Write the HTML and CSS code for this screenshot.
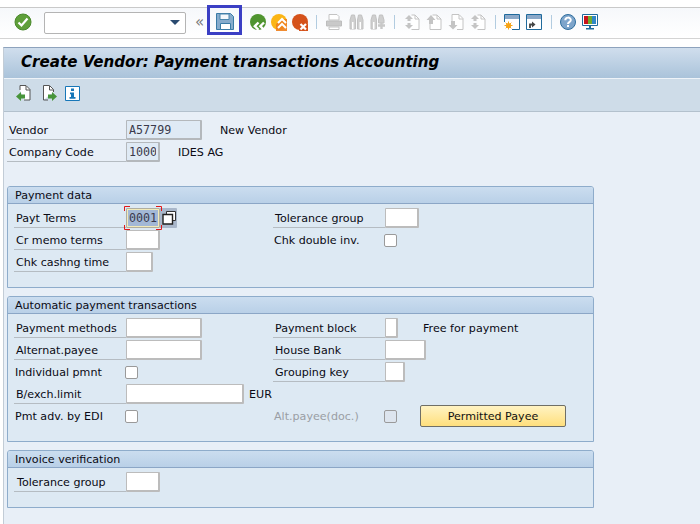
FILE: index.html
```html
<!DOCTYPE html>
<html lang="en">
<head>
<meta charset="utf-8">
<title>Create Vendor: Payment transactions Accounting</title>
<link rel="stylesheet" href="styles.css">
</head>
<body>
<header class="systoolbar">
  <svg class="ico check" width="18" height="18" viewBox="0 0 18 18"><circle cx="9" cy="9" r="8" fill="#5f9f3a" stroke="#4a8a2c"/><path d="M4.500 9.500l3 3 6-7" fill="none" stroke="#fff" stroke-width="2.200"/></svg>
  <div class="combo"><span class="combo-arrow"></span></div>
  <span class="chev">«</span>
  <button class="save" type="button" aria-label="Save"><svg width="18" height="17" viewBox="0 0 18 17"><path d="M.5.500h14l3 3v13H.5z" fill="#86abcc" stroke="#3a7ba6"/><path d="M4 1h9v5.500H4z" fill="#f4f8fb" stroke="#4a86ad"/><path d="M4.500 10.500h10v6h-10z" fill="#fff" stroke="#3a7ba6"/></svg></button>
  <div class="tool-group nav">
    <svg width="16" height="17" viewBox="0 0 16 17"><circle cx="8" cy="8" r="8" fill="#4f9430"/><path d="M8.500 8.500l-3.700 3.700 3.700 3.700M14 8.500l-3.700 3.700 3.700 3.700" fill="none" stroke="#fff" stroke-width="2.400"/></svg>
    <svg width="16" height="17" viewBox="0 0 16 17"><circle cx="8" cy="8" r="8" fill="#fbb515"/><path d="M16 5h-5L5 10v7h11z" fill="#ee7f1c" opacity=".9"/><path d="M7 9l4-4 4 4M7 14l4-4 4 4" fill="none" stroke="#fff" stroke-width="2"/></svg>
    <svg width="16" height="17" viewBox="0 0 16 17"><circle cx="8" cy="8" r="8" fill="#d5521b"/><path d="M7 9.500h9v7.500H7z" fill="#d5521b"/><path d="M8.500 10l5.500 5.500M14 10l-5.500 5.500" stroke="#fff" stroke-width="2.200"/></svg>
  </div>
  <span class="sep sep-a"></span>
  <div class="tool-group off">
    <svg class="print" width="16" height="16" viewBox="0 0 16 16"><path d="M4 .500h7l2 2V6H3V.500z" fill="#fff" stroke="#c4c4c4"/><path d="M.5 7h15v5H.5z" fill="#c9c9c9" stroke="#bdbdbd"/><path d="M3 13h10v2.500H3z" fill="#fff" stroke="#c4c4c4"/></svg>
    <svg width="15" height="16" viewBox="0 0 15 16"><path d="M1 15V6l1.500-5h3L6.500 6v9zM8.500 15V6l1-5h3L14 6v9z" fill="#cfcfcf" stroke="#c2c2c2"/><path d="M3 8h1.500v7H3zM10.500 8H12v7h-1.500z" fill="#fff"/></svg>
    <svg width="15" height="16" viewBox="0 0 15 16"><path d="M1 15V6l1.500-5h3L6.500 6v9zM8.500 9V6l1-5h3L14 6v3z" fill="#cfcfcf" stroke="#c2c2c2"/><path d="M3 8h1.500v7H3z" fill="#fff"/><path d="M8 11.500h7M11.500 8v7" stroke="#c8c8c8" stroke-width="2.400"/></svg>
  </div>
  <span class="sep sep-b"></span>
  <div class="tool-group off">
    <svg width="16" height="16" viewBox="0 0 16 16"><path d="M7.500 1H11l4 4v10.500H7.500" fill="#fff" stroke="#c4c4c4"/><path d="M11 1v4h4" fill="none" stroke="#c4c4c4"/><path d="M5 1L1 5h2.500v2h3V5H9zM5 15l4-4H6.500V9h-3v2H1z" fill="#c4c4c4"/></svg>
    <svg width="16" height="16" viewBox="0 0 16 16"><path d="M6.500 1H11l4 4v10.500H4V9" fill="#fff" stroke="#c4c4c4"/><path d="M11 1v4h4" fill="none" stroke="#c4c4c4"/><path d="M5 1L.5 6H3v4h4V6h2.500z" fill="#c4c4c4"/></svg>
    <svg width="16" height="16" viewBox="0 0 16 16"><path d="M4 7V.500h7l4 4v11H9" fill="#fff" stroke="#c4c4c4"/><path d="M11 1v4h4" fill="none" stroke="#c4c4c4"/><path d="M5 15.500L.5 11H3V7h4v4h2.500z" fill="#c4c4c4"/></svg>
    <svg width="16" height="16" viewBox="0 0 16 16"><path d="M7.500 1H11l4 4v10.500H7.500" fill="#fff" stroke="#c4c4c4"/><path d="M11 1v4h4" fill="none" stroke="#c4c4c4"/><path d="M5 1L1 5h2.500v2h3V5H9zM5 15l4-4H6.500V9h-3v2H1z" fill="#c4c4c4"/></svg>
  </div>
  <span class="sep sep-c"></span>
  <div class="tool-group">
    <svg width="16" height="16" viewBox="0 0 16 16"><path d="M.5 8V.500h15v15H8" fill="#fff" stroke="#1f6a9c"/><path d="M1 1h14v4H1z" fill="#8ba8c8"/><circle cx="4.500" cy="11.500" r="2.600" fill="#f7a416"/><path d="M4.500 7.500v8M.5 11.500h8M1.700 8.700l5.600 5.600M7.300 8.700l-5.600 5.600" stroke="#f7a416" stroke-width="1"/></svg>
    <svg width="16" height="16" viewBox="0 0 16 16"><path d="M.5.500h15v15H.5z" fill="#fff" stroke="#1f6a9c"/><path d="M1 1h14v4H1z" fill="#8ba8c8"/><path d="M4 14v-3.500h2.500" fill="none" stroke="#444" stroke-width="1.800"/><path d="M9.500 10.500L6 7.500v6z" fill="#444"/></svg>
  </div>
  <span class="sep sep-c"></span>
  <div class="tool-group">
    <svg width="16" height="16" viewBox="0 0 16 16"><circle cx="8" cy="8" r="7.500" fill="#7ea5cb" stroke="#2f6f9f"/><path d="M5.300 6.200C5.300 2.800 10.800 2.800 10.800 6c0 2.300-2.800 2-2.800 4" fill="none" stroke="#fff" stroke-width="2"/><path d="M7 11h2v2H7z" fill="#fff"/></svg>
    <svg width="16" height="16" viewBox="0 0 16 16"><path d="M.5.500h15v11H.5z" fill="#fff" stroke="#1f6a9c"/><path d="M2 2h4v8H2z" fill="#c8141c"/><path d="M6 2h4v8H6z" fill="#72ab2e"/><path d="M10 2h4v8h-4z" fill="#2f86c6"/><path d="M7 12h2v2H7zM4 14h8v1.500H4z" fill="#1f6a9c"/></svg>
  </div>
</header>

<main class="screen">
  <h1 class="title">Create Vendor: Payment transactions Accounting</h1>
  <nav class="apptoolbar">
    <svg class="app-first" width="15" height="16" viewBox="0 0 15 16"><path d="M4 5V.500h6l4 4v10.500H8" fill="#fff" stroke="#555"/><path d="M10 1v4h4" fill="none" stroke="#555"/><path d="M0 11.500L5 7v2.500h4v4H5V16z" fill="#47943a"/></svg>
    <svg class="app-next" width="15" height="16" viewBox="0 0 15 16"><path d="M1.500 15V.500h6l4 4V7M1.500 15H6" fill="#fff" stroke="#555"/><path d="M7.500 1v4h4" fill="none" stroke="#555"/><path d="M15 11.500L10 7v2.500H6v4h4V16z" fill="#47943a"/></svg>
    <svg class="app-info" width="15" height="15" viewBox="0 0 15 15"><path d="M.5.500h14v14H.5z" fill="#fff" stroke="#1777b8"/><path d="M6 2.500h3v2.500H6zM5 6.500h4V11h1.500v1.800h-6V11H6V8.300H5z" fill="#1777b8"/></svg>
  </nav>
  <div class="content">
    <div class="header-fields">
      <div class="row">
        <span class="label label-wide">Vendor</span>
        <input class="field w6 readonly" value="A57799" readonly>
        <span class="note note-vendor">New Vendor</span>
      </div>
      <div class="row">
        <span class="label label-wide">Company Code</span>
        <input class="field w4 readonly" value="1000" readonly>
        <span class="note note-company">IDES AG</span>
      </div>
    </div>

    <section class="group">
      <h2 class="group-title">Payment data</h2>
      <div class="group-body">
        <div class="row">
          <span class="label">Payt Terms</span>
          <span class="focus-wrap">
            <input class="field w4 focused" value="0001">
            <svg class="focus-corners" width="38" height="24" viewBox="0 0 38 24"><path d="M.5 5V.500H6M32 .500h5.500V5M.5 19v4.500H6M32 23.500h5.500V19" fill="none" stroke="#e01818"/></svg>
          </span>
          <span class="f4"><svg width="14" height="14" viewBox="0 0 14 14"><path d="M4.500.500h9v9h-9z" fill="#fff" stroke="#333"/><path d="M1 3.500h9.500V13H1z" fill="#fff" stroke="#222" stroke-width="1.400"/></svg></span>
        </div>
        <div class="row"><span class="label">Tolerance group</span><input class="field w4"></div>
        <div class="row"><span class="label">Cr memo terms</span><input class="field w4"></div>
        <div class="row"><span class="plain">Chk double inv.</span><input class="box" type="checkbox"></div>
        <div class="row"><span class="label">Chk cashng time</span><input class="field w3"></div>
      </div>
    </section>

    <section class="group">
      <h2 class="group-title">Automatic payment transactions</h2>
      <div class="group-body">
        <div class="row"><span class="label">Payment methods</span><input class="field w6"></div>
        <div class="row"><span class="label">Payment block</span><input class="field w1"><span class="note note-free">Free for payment</span></div>
        <div class="row"><span class="label">Alternat.payee</span><input class="field w6"></div>
        <div class="row"><span class="label">House Bank</span><input class="field w5"></div>
        <div class="row"><span class="plain">Individual pmnt</span><input class="box" type="checkbox"></div>
        <div class="row"><span class="label">Grouping key</span><input class="field w2"></div>
        <div class="row"><span class="label">B/exch.limit</span><input class="field w13"><span class="note note-eur">EUR</span></div>
        <div class="row"></div>
        <div class="row"><span class="plain">Pmt adv. by EDI</span><input class="box" type="checkbox"></div>
        <div class="row"><span class="plain disabled">Alt.payee(doc.)</span><input class="box box-off" type="checkbox" disabled><button class="btn" type="button">Permitted Payee</button></div>
      </div>
    </section>

    <section class="group">
      <h2 class="group-title">Invoice verification</h2>
      <div class="group-body">
        <div class="row"><span class="label label-inset">Tolerance group</span><input class="field w4"></div>
      </div>
    </section>
  </div>
</main>
</body>
</html>
```

FILE: styles.css
```css
* { box-sizing: border-box; }
html, body { margin: 0; height: 524px; overflow: hidden; background: #fff; }
body { font: 11.1px/21px "DejaVu Sans", sans-serif; color: #0a0a14; }
svg { display: block; flex: none; }

.systoolbar {
  display: flex; align-items: center; position: relative;
  height: 32px; margin-top: 7px; padding: 0 0 2px 14px;
  border-top: 1px solid #c9c9c9; border-bottom: 1px solid #d4d4d4;
  background: linear-gradient(#f6f8fb, #fff);
}
.combo {
  width: 142px; height: 22px; margin: 2px 0 0 12px; position: relative;
  border: 1px solid #b4b4b4; border-radius: 2px; background: #fff;
}
.combo-arrow {
  position: absolute; right: 5px; top: 7px;
  border: 5px solid transparent; border-top: 5px solid #2a4a70; border-bottom: 0;
}
.chev { width: 12px; margin-left: 9px; font-size: 15px; line-height: 15px; color: #777; }
.save {
  width: 35px; height: 30px; margin: 0 0 4px; padding: 3px 0 0 6px;
  border: 3px solid #3b3fc4; background: none;
}
.tool-group { display: flex; gap: 6px; }
.nav { margin-left: 8px; gap: 5px; }
.sep { width: 1px; height: 14px; background: #b2cce0; }
.sep-a { margin: 0 9px 0 8px; }
.sep-b { margin: 0 9px; }
.sep-c { margin: 0 8px 0 9px; }
.off .print { margin-right: 1px; }

.screen {
  height: 477px; margin: 8px 0 0 3px;
  border-left: 1px solid #c2ccd6; border-top: 1px solid #8ea3bd;
  background: #e8eff7;
}
.title {
  height: 31px; margin: 0; padding-left: 17px;
  font: italic bold 15.100px/28px "DejaVu Sans", sans-serif; color: #000;
  background: linear-gradient(#d0deed, #aac3da);
  border-bottom: 1px solid #eef3f8;
}
.apptoolbar {
  display: flex; align-items: center; height: 33px; padding: 0 0 4px 12px; gap: 11px;
  background: #cedce8; border-bottom: 1px solid #b3c1cd;
}
.app-next { margin-right: -3px; }
.content { padding: 8px 0 0 3px; }

.header-fields { display: grid; gap: 2px; margin-bottom: 24px; }
.row { display: flex; align-items: center; height: 20px; min-width: 0; }
.label {
  flex: none; width: 112px; height: 20px; padding-left: 2px; line-height: 22px;
  border-bottom: 1px solid #b5bcc2; white-space: nowrap;
}
.label-wide { width: 119px; }
.label-inset { padding-left: 3px; }
.plain { flex: none; width: 111px; padding-left: 1px; white-space: nowrap; }
.disabled { color: #9a9ea4; }
.note { white-space: nowrap; }
.note-vendor { margin-left: 18px; }
.note-company { margin-left: 18px; }
.note-free { margin-left: 25px; }
.note-eur { margin-left: 5px; }

.field {
  display: block; flex: none; height: 20px; margin: 0; padding: 0 2px;
  border: 1px solid #bcbcbc; border-right-width: 2px; border-bottom-width: 2px;
  border-radius: 1px; background: #fff; outline: none;
  font: 11.700px/16px "DejaVu Sans Mono", monospace; color: #3a3a4c;
}
.readonly { background: #dfeaf5; border-color: #b4b8bc; }
.w1 { width: 13px; }
.w2 { width: 20px; }
.w3 { width: 27px; }
.w4 { width: 34px; }
.w5 { width: 41px; }
.w6 { width: 76px; }
.w13 { width: 118px; }

.group { width: 587px; margin-bottom: 8px; border: 1px solid #8eaccb; border-radius: 3px 3px 0 0; background: #dde9f3; }
.group-title {
  height: 17px; margin: 0; padding-left: 7px;
  font: 11.1px/17px "DejaVu Sans", sans-serif;
  background: linear-gradient(#cbddef, #b9d0e7);
  border-bottom: 1px solid #8ba6c6; border-radius: 2px 2px 0 0;
}
.group-body {
  display: grid; grid-template-columns: 259px 1fr; gap: 2px 0;
  padding: 4px 0 15px 6px;
}

.box {
  appearance: none; display: block; flex: none; width: 13px; height: 13px; margin: 0;
  border: 1px solid #9a9a9a; border-radius: 2px; background: #fff;
}
.box-off { background: #dde5ee; }
.btn {
  width: 146px; height: 22px; margin: 0 0 0 23px; padding: 1px 0 0;
  border: 1px solid #6f6f66; border-radius: 2px;
  background: linear-gradient(#fff3c2, #ffdf7c);
  font: 11.1px/18px "DejaVu Sans", sans-serif; color: #111;
}
.focus-wrap { position: relative; flex: none; }
.focused { width: 34px; padding-left: 2px; background: #a3b8d6; border: 1px solid #b0aea0; box-shadow: inset 0 0 0 1px #f2eab8; }
.focus-corners { position: absolute; left: -2px; top: -2px; pointer-events: none; }
.f4 { display: flex; align-items: center; justify-content: center; width: 17px; height: 20px; background: #a9b7ca; border-radius: 0 1px 1px 0; }
```
